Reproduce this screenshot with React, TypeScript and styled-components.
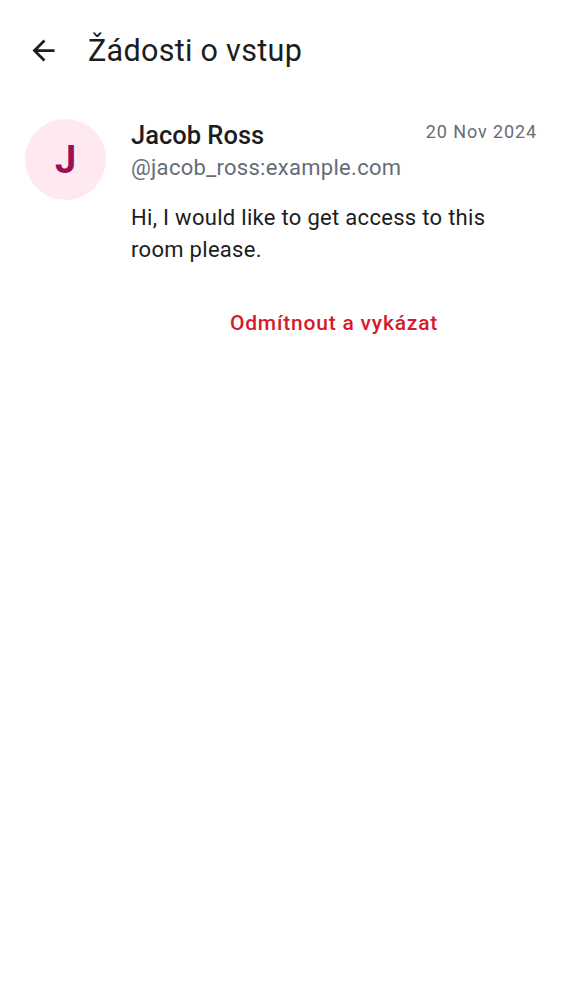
import React from "react";
import styled, { createGlobalStyle } from "styled-components";

const GlobalStyle = createGlobalStyle`
    html, body {
        margin: 0;
        padding: 0;
        background: #ffffff;
    }
    body {
        font-family: Roboto, "Noto Sans", "Liberation Sans", sans-serif;
        color: #1b1d21;
    }
`;

type JoinRequest = {
    name: string;
    userId: string;
    date: string;
    message: string;
};

const requests: JoinRequest[] = [
    {
        name: "Jacob Ross",
        userId: "@jacob_ross:example.com",
        date: "20 Nov 2024",
        message: "Hi, I would like to get access to this room please.",
    },
];

export default function App(): React.ReactElement {
    return (
        <>
            <GlobalStyle />
            <Screen>
                <TopBar>
                    <BackButton aria-label="Zpět">
                        <svg width="33" height="33" viewBox="0 0 24 24">
                            <path
                                d="M20 11H7.83l5.59-5.59L12 4l-8 8 8 8 1.41-1.41L7.83 13H20v-2z"
                                fill="currentColor"
                            />
                        </svg>
                    </BackButton>
                    <Title>Žádosti o vstup</Title>
                </TopBar>
                {requests.map((req) => (
                    <RequestRow key={req.userId}>
                        <Avatar>{req.name.charAt(0)}</Avatar>
                        <Content>
                            <HeaderRow>
                                <NameBlock>
                                    <Name>{req.name}</Name>
                                    <UserId>{req.userId}</UserId>
                                </NameBlock>
                                <DateText>{req.date}</DateText>
                            </HeaderRow>
                            <Message>{req.message}</Message>
                            <Actions>
                                <DangerButton>Odmítnout a vykázat</DangerButton>
                            </Actions>
                        </Content>
                    </RequestRow>
                ))}
            </Screen>
        </>
    );
}

const Screen = styled.div`
    width: 562px;
    min-height: 1000px;
    background: #ffffff;
`;

const TopBar = styled.div`
    display: flex;
    align-items: center;
    height: 100px;
    padding-left: 27px;
    box-sizing: border-box;
`;

const BackButton = styled.button`
    display: flex;
    align-items: center;
    justify-content: center;
    width: 33px;
    height: 33px;
    padding: 0;
    border: none;
    background: none;
    color: #1b1d21;
`;

const Title = styled.h1`
    margin: 0 0 0 28px;
    font-size: 30.5px;
    font-weight: 400;
    letter-spacing: 0.3px;
    color: #1b1d21;
`;

const RequestRow = styled.div`
    display: flex;
    align-items: flex-start;
    padding: 19px 25px 0 25px;
    gap: 25px;
`;

const Avatar = styled.div`
    flex: none;
    width: 81px;
    height: 81px;
    border-radius: 50%;
    background: #fde9ef;
    color: #9c0f56;
    display: flex;
    align-items: center;
    justify-content: center;
    font-size: 38px;
    font-weight: 700;
`;

const Content = styled.div`
    flex: 1;
    min-width: 0;
    display: flex;
    flex-direction: column;
`;

const HeaderRow = styled.div`
    display: flex;
    align-items: flex-start;
    justify-content: space-between;
`;

const NameBlock = styled.div`
    display: flex;
    flex-direction: column;
`;

const Name = styled.div`
    font-size: 25.5px;
    font-weight: 500;
    line-height: 33px;
    color: #1b1d21;
`;

const UserId = styled.div`
    font-size: 22px;
    line-height: 32px;
    letter-spacing: 0.3px;
    color: #656d77;
`;

const DateText = styled.div`
    font-size: 18px;
    line-height: 24px;
    letter-spacing: 0.9px;
    color: #656d77;
    margin-top: 1px;
`;

const Message = styled.p`
    margin: 18px 0 0;
    font-size: 22px;
    line-height: 32px;
    letter-spacing: 0.3px;
    color: #1b1d21;
`;

const Actions = styled.div`
    display: flex;
    justify-content: center;
    margin-top: 37px;
`;

const DangerButton = styled.button`
    border: none;
    background: none;
    padding: 8px 16px;
    font-family: Roboto, "Noto Sans", "Liberation Sans", sans-serif;
    font-size: 21px;
    font-weight: 500;
    letter-spacing: 0.8px;
    color: #d51a2b;
`;
